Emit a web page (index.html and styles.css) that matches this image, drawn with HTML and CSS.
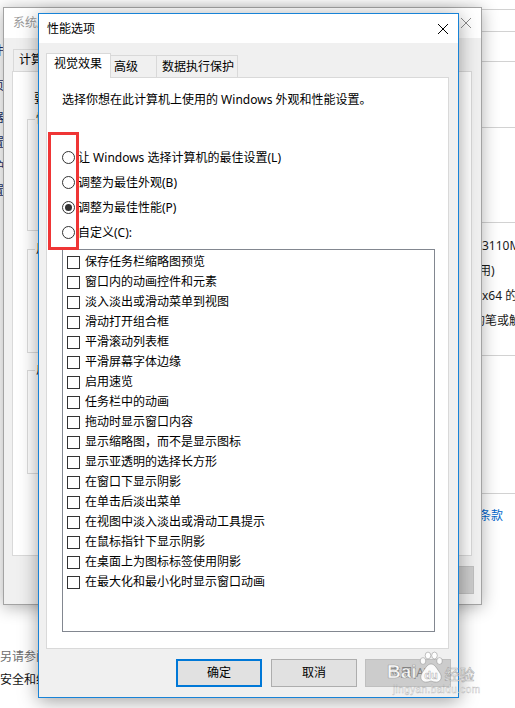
FILE: index.html
```html
<!DOCTYPE html>
<html lang="zh-CN">
<head>
<meta charset="utf-8">
<title>性能选项</title>
<link rel="stylesheet" href="styles.css">
</head>
<body>
<div class="screen">
  <div class="page">
    <div class="page-left">
      <div class="nav">
        <div class="nav-item n1">软件</div>
        <div class="nav-item n2">主页</div>
        <div class="nav-item n3">理器</div>
        <div class="nav-item n4">设置</div>
        <div class="nav-item n5">保护</div>
        <div class="nav-item n6">设置</div>
      </div>
      <div class="see-also">
        <div class="see-title">另请参阅</div>
        <div class="see-link">安全和维护</div>
      </div>
    </div>
    <div class="page-right">
      <div class="band b1"></div>
      <div class="band b2"></div>
      <div class="band b3"></div>
      <div class="band b4"></div>
      <div class="band b5"></div>
      <div class="band b6">
        <div class="spec">3110M CPU @ 2.40GHz</div>
        <div class="spec cut3">用)</div>
        <div class="spec">x64 的处理器</div>
        <div class="spec cut9">的笔或触控输入</div>
      </div>
      <div class="band b7"></div>
      <div class="terms">条款</div>
    </div>
  </div>

  <div class="win sys">
    <div class="sys-title">
      <span>系统属性</span>
      <svg class="close" width="10" height="10" viewBox="0 0 10 10"><path d="M0 0L10 10M10 0L0 10" stroke="#8c8c8c" stroke-width="1"/></svg>
    </div>
    <div class="sys-body">
      <div class="sys-tabs">
        <div class="sys-tab">计算机名</div>
        <div class="sys-tab">硬件</div>
        <div class="sys-tab">高级</div>
        <div class="sys-tab">系统保护</div>
        <div class="sys-tab">远程</div>
      </div>
      <div class="sys-panel">
        <div class="sys-note">要进行大多数更改，你必须作为管理员登录。</div>
        <fieldset class="grp g1"><legend>性能</legend></fieldset>
        <fieldset class="grp g2"><legend>用户配置文件</legend></fieldset>
        <fieldset class="grp g3"><legend>启动和故障恢复</legend></fieldset>
      </div>
      <div class="sys-buttons">
        <div class="btn sbtn">确定</div>
        <div class="btn sbtn">取消</div>
        <div class="btn sbtn disabled">应用(A)</div>
      </div>
    </div>
  </div>

  <div class="win dlg">
    <div class="dlg-title">
      <span>性能选项</span>
      <svg class="close" width="10" height="10" viewBox="0 0 10 10"><path d="M0 0L10 10M10 0L0 10" stroke="#000" stroke-width="1"/></svg>
    </div>
    <div class="dlg-body">
      <div class="tabs">
        <div class="tab active">视觉效果</div>
        <div class="tab t2">高级</div>
        <div class="tab t3">数据执行保护</div>
      </div>
      <div class="panel">
        <p class="intro">选择你想在此计算机上使用的 Windows 外观和性能设置。</p>
        <div class="radios">
          <div class="radio"><span class="rbox"></span>让 Windows 选择计算机的最佳设置(L)</div>
          <div class="radio"><span class="rbox"></span>调整为最佳外观(B)</div>
          <div class="radio"><span class="rbox on"></span>调整为最佳性能(P)</div>
          <div class="radio"><span class="rbox"></span>自定义(C):</div>
        </div>
        <div class="listbox">
          <div class="item"><span class="cbox"></span>保存任务栏缩略图预览</div>
          <div class="item"><span class="cbox"></span>窗口内的动画控件和元素</div>
          <div class="item"><span class="cbox"></span>淡入淡出或滑动菜单到视图</div>
          <div class="item"><span class="cbox"></span>滑动打开组合框</div>
          <div class="item"><span class="cbox"></span>平滑滚动列表框</div>
          <div class="item"><span class="cbox"></span>平滑屏幕字体边缘</div>
          <div class="item"><span class="cbox"></span>启用速览</div>
          <div class="item"><span class="cbox"></span>任务栏中的动画</div>
          <div class="item"><span class="cbox"></span>拖动时显示窗口内容</div>
          <div class="item"><span class="cbox"></span>显示缩略图，而不是显示图标</div>
          <div class="item"><span class="cbox"></span>显示亚透明的选择长方形</div>
          <div class="item"><span class="cbox"></span>在窗口下显示阴影</div>
          <div class="item"><span class="cbox"></span>在单击后淡出菜单</div>
          <div class="item"><span class="cbox"></span>在视图中淡入淡出或滑动工具提示</div>
          <div class="item"><span class="cbox"></span>在鼠标指针下显示阴影</div>
          <div class="item"><span class="cbox"></span>在桌面上为图标标签使用阴影</div>
          <div class="item"><span class="cbox"></span>在最大化和最小化时显示窗口动画</div>
        </div>
      </div>
      <div class="buttons">
        <div class="btn default">确定</div>
        <div class="btn b-cancel">取消</div>
        <div class="btn b-apply disabled">应用(A)</div>
      </div>
    </div>
  </div>

  <div class="mark"></div>

  <div class="watermark">
    <div class="wm-row">
      <span class="wm-bai">Bai</span>
      <svg class="wm-paw" width="24" height="33" viewBox="0 0 24 33">
        <g fill="rgba(255,255,255,0.92)" stroke="rgba(120,120,120,0.55)" stroke-width="0.8">
          <ellipse cx="4" cy="10" rx="2.8" ry="3.4"/>
          <ellipse cx="9" cy="4.5" rx="2.8" ry="3.4"/>
          <ellipse cx="15.5" cy="4.5" rx="2.8" ry="3.4"/>
          <ellipse cx="20.5" cy="10" rx="2.8" ry="3.4"/>
          <path d="M12 13c4 0 6 5 9 9c3 5 0 10-5 9c-2 0-3-1-4-1s-2 1-4 1c-5 1-8-4-5-9c3-4 5-9 9-9z"/>
        </g>
        <text x="12" y="28" text-anchor="middle" class="wm-du">du</text>
      </svg>
      <span class="wm-jy">经验</span>
    </div>
    <div class="wm-url">jingyan.baidu.com</div>
  </div>
</div>
</body>
</html>
```
FILE: styles.css
```css
* { box-sizing: border-box; }
html, body { margin: 0; padding: 0; }
body {
  width: 515px;
  height: 708px;
  overflow: hidden;
  background: #fff;
  font-family: "Noto Sans", "Noto Sans CJK SC", sans-serif;
  font-size: 12px;
  line-height: 16px;
  color: #000;
}
.screen { position: relative; width: 515px; height: 708px; overflow: hidden; }

/* background control panel page */
.page {
  position: absolute;
  inset: 0;
  display: grid;
  grid-template-columns: 482px 1fr;
}
.page-left { display: flex; flex-direction: column; overflow: hidden; }
.nav { display: flex; flex-direction: column; }
.nav-item { margin-left: -20px; white-space: nowrap; color: #1c2f66; }
.n1 { margin-top: 43px; }
.n2 { margin-top: 19px; }
.n3 { margin-top: 16px; }
.n4 { margin-top: 9px; }
.n5 { margin-top: 8px; }
.n6 { margin-top: 8px; }
.see-also { margin-top: auto; padding-bottom: 20px; white-space: nowrap; }
.see-title { color: #6d6d6d; }
.see-link { margin-top: 7px; color: #111; }
.page-right { display: flex; flex-direction: column; overflow: hidden; white-space: nowrap; }
.band { border-bottom: 1px solid #d2d2d2; flex: none; }
.b1 { height: 10px; }
.b2 { height: 22px; }
.b3 { height: 30px; }
.b4 { height: 66px; }
.b5 { height: 95px; }
.b6 { height: 133px; padding-top: 10px; }
.b7 { height: 138px; }
.spec { line-height: 25px; color: #1a1a1a; }
.cut3 { margin-left: -3px; }
.cut9 { margin-left: -9px; }
.terms { padding-top: 14px; margin-left: -3px; color: #0066cc; }

/* windows */
.win { position: absolute; display: flex; flex-direction: column; }

.sys {
  left: 3px; top: 7px; width: 479px; height: 598px;
  border: 1px solid #a3a3a3;
  background: #f0f0f0;
  box-shadow: 0 2px 16px rgba(0,0,0,0.32);
  z-index: 1;
}
.sys-title {
  height: 30px; flex: none;
  background: #fff;
  display: flex; align-items: center;
  padding: 0 10px 0 9px;
  color: #9a9a9a;
}
.close { margin-left: auto; display: block; flex: none; }
.sys-body { flex: 1; display: flex; flex-direction: column; padding: 11px 9px 0 8px; }
.sys-tabs { display: flex; height: 22px; padding-left: 1px; flex: none; }
.sys-tab {
  height: 22px;
  border: 1px solid #d9d9d9; border-bottom: none;
  padding: 2px 6px 0 5px;
  background: #f0f0f0;
  white-space: nowrap;
}
.sys-tab + .sys-tab { margin-left: -1px; }
.sys-panel {
  height: 485px; flex: none;
  background: #fff;
  border: 1px solid #d9d9d9;
  padding: 19px 14px 0 14px;
  display: flex; flex-direction: column;
}
.sys-note { margin-left: 7px; white-space: nowrap; }
.grp { margin: 0; padding: 0 7px; border: 1px solid #dcdcdc; min-width: 0; }
.grp legend { padding: 0 1px; line-height: 16px; }
.g1 { margin-top: 4px; height: 120px; }
.g2 { margin-top: 10px; height: 112px; }
.g3 { margin-top: 9px; height: 112px; }
.sys-buttons { display: flex; justify-content: flex-end; gap: 8px; margin-top: 10px; margin-right: -2px; }
.sbtn { height: 27px; }

.dlg {
  left: 38px; top: 13px; width: 421px; height: 685px;
  border: 1px solid #1883d7;
  background: #f0f0f0;
  box-shadow: 0 3px 18px rgba(0,0,0,0.38);
  z-index: 2;
}
.dlg-title {
  height: 29px; flex: none;
  background: #fff;
  display: flex; align-items: center;
  padding: 0 10px 0 8px;
}
.dlg-body { flex: 1; display: flex; flex-direction: column; padding: 10px 9px 10px 7px; }
.tabs { display: flex; align-items: flex-end; height: 24px; flex: none; }
.tab {
  height: 22px;
  border: 1px solid #d9d9d9; border-bottom: none;
  background: #f0f0f0;
  padding-top: 3px;
  white-space: nowrap;
}
.tab.active {
  height: 25px; width: 65px;
  margin-bottom: -1px;
  background: #fff;
  position: relative; z-index: 1;
  padding: 2px 0 0 7px;
}
.t2 { width: 47px; margin-left: -1px; padding-left: 3px; }
.t3 { width: 82px; margin-left: -1px; padding-left: 5px; }
.panel {
  height: 572px; flex: none;
  background: #fff;
  border: 1px solid #d9d9d9;
  padding: 14px 0 0 15px;
}
.intro { margin: 0; white-space: nowrap; }
.radios { margin-top: 37px; }
.radio { display: flex; align-items: center; height: 25px; white-space: nowrap; }
.rbox {
  width: 13px; height: 13px; flex: none;
  border: 1px solid #333; border-radius: 50%;
  margin-right: 3px;
  display: flex; align-items: center; justify-content: center;
}
.rbox.on::after { content: ""; width: 7px; height: 7px; border-radius: 50%; background: #333; }
.listbox {
  margin-top: 4px;
  width: 373px; height: 383px;
  border: 1px solid #828790;
  padding-top: 2px;
  background: #fff;
}
.item { display: flex; align-items: center; height: 20px; padding-left: 4px; white-space: nowrap; }
.cbox { width: 13px; height: 13px; flex: none; border: 1px solid #333; margin-right: 5px; background: #fff; }

.buttons { display: flex; justify-content: flex-end; margin-top: 10px; margin-right: -2px; }
.btn {
  width: 86px; height: 28px; flex: none;
  border: 1px solid #adadad;
  background: #e1e1e1;
  display: flex; align-items: center; justify-content: center;
  white-space: nowrap;
}
.b-cancel { margin-left: 9px; }
.b-apply { margin-left: 8px; }
.btn.default { border: 2px solid #0078d7; }
.btn.disabled { background: #cccccc; border-color: #bfbfbf; color: #838383; }

/* red annotation box */
.mark {
  position: absolute; left: 48px; top: 132px;
  width: 31px; height: 118px;
  border: 3px solid #ef3535;
  z-index: 3;
}

/* baidu watermark */
.watermark {
  position: absolute; left: 387px; top: 650px;
  z-index: 4;
  color: rgba(255,255,255,0.92);
  white-space: nowrap;
}
.wm-row { display: flex; align-items: flex-end; height: 34px; }
.wm-bai {
  font: bold 19px/20px "Liberation Sans", sans-serif;
  -webkit-text-stroke: 0.7px rgba(110,110,110,0.55);
  margin-bottom: 2px;
}
.wm-paw { display: block; margin-left: 2px; }
.wm-du {
  font: bold 11px "Liberation Sans", sans-serif;
  fill: rgba(255,255,255,0.95);
  stroke: rgba(110,110,110,0.6);
  stroke-width: 0.5;
}
.wm-jy {
  font: 15px/18px "Noto Sans CJK SC", sans-serif;
  -webkit-text-stroke: 0.6px rgba(110,110,110,0.55);
  margin-left: 2px; margin-bottom: 1px;
}
.wm-url {
  font: 10px/12px "Liberation Sans", sans-serif;
  letter-spacing: 0.4px;
  margin-left: 6px;
  -webkit-text-stroke: 0.4px rgba(120,120,120,0.5);
}
```
